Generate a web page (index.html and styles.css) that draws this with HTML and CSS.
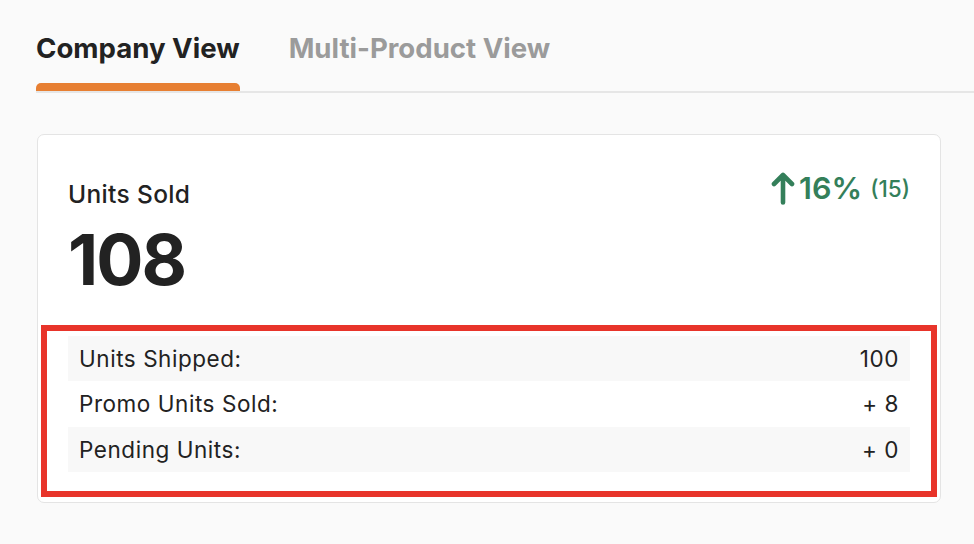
FILE: index.html
```html
<!DOCTYPE html>
<html>
<head>
<meta charset="utf-8">
<link rel="stylesheet" href="styles.css">
</head>
<body>
<div class="page">
  <nav class="tabs">
    <div class="tab active">Company View</div>
    <div class="tab">Multi-Product View</div>
  </nav>
  <section class="card">
    <div class="card-head">
      <div class="title">Units Sold</div>
      <div class="delta">
        <svg class="arrow" viewBox="0 0 24 33" width="24" height="33" aria-hidden="true">
          <path d="M12 30.5 V3.5 M3 12 L12 3 L21 12" fill="none" stroke="currentColor" stroke-width="4.6" stroke-linecap="round" stroke-linejoin="round"/>
        </svg>
        <span class="pct">16%</span>
        <span class="abs">(15)</span>
      </div>
    </div>
    <div class="big">108</div>
    <div class="breakdown">
      <div class="row"><span>Units Shipped:</span><span>100</span></div>
      <div class="row"><span>Promo Units Sold:</span><span>+ 8</span></div>
      <div class="row"><span>Pending Units:</span><span>+ 0</span></div>
      <div class="highlight"></div>
    </div>
  </section>
</div>
</body>
</html>
```

FILE: styles.css
```css
* { box-sizing: border-box; }
html, body { margin: 0; padding: 0; }
body {
  background: #fafafa;
  font-family: "Inter", "Liberation Sans", sans-serif;
  color: #222222;
  width: 974px;
  height: 544px;
  overflow: hidden;
}
.page { padding-top: 32px; }

.tabs {
  display: flex;
  gap: 49px;
  margin-left: 36px;
  border-bottom: 2px solid #e6e6e6;
}
.tab {
  position: relative;
  font-size: 27.6px;
  font-weight: 700;
  line-height: 32px;
  padding-bottom: 27px;
  color: #9b9b9b;
}
.tab.active { color: #222222; }
.tab.active::after {
  content: "";
  position: absolute;
  left: 0; right: 0; bottom: 0;
  height: 8px;
  background: #e77f32;
  border-radius: 5px 5px 0 0;
}

.card {
  margin: 41px 33px 0 37px;
  background: #ffffff;
  border: 1px solid #e4e4e4;
  border-radius: 7px;
  padding: 46px 30px 30px 30px;
}
.card-head {
  display: flex;
  justify-content: space-between;
  align-items: flex-start;
}
.title {
  font-size: 24.5px;
  font-weight: 500;
  line-height: 26px;
  letter-spacing: 0.35px;
}
.delta {
  display: flex;
  align-items: center;
  color: #347f5a;
  margin-top: -11px;
  height: 36px;
}
.arrow { display: block; margin-right: 4px; margin-top: 1px; }
.pct {
  font-size: 30.5px;
  font-weight: 600;
  line-height: 36px;
}
.abs {
  font-size: 22.5px;
  font-weight: 500;
  line-height: 36px;
  margin-left: 8px;
  padding-top: 1px;
}
.big {
  font-size: 70px;
  font-weight: 700;
  line-height: 70px;
  margin-top: 18px;
  letter-spacing: -2px;
}

.breakdown {
  position: relative;
  margin-top: 41px;
}
.row {
  display: flex;
  justify-content: space-between;
  height: 45.4px;
  line-height: 45px;
  font-size: 22.5px;
  letter-spacing: 0.55px;
  padding: 0 11px;
  color: #222222;
}
.row:nth-child(odd) { background: #f8f8f8; }
.highlight {
  position: absolute;
  left: -27px; right: -27px; top: -11px; bottom: -25px;
  border: 6px solid #e8342a;
  pointer-events: none;
}
```
